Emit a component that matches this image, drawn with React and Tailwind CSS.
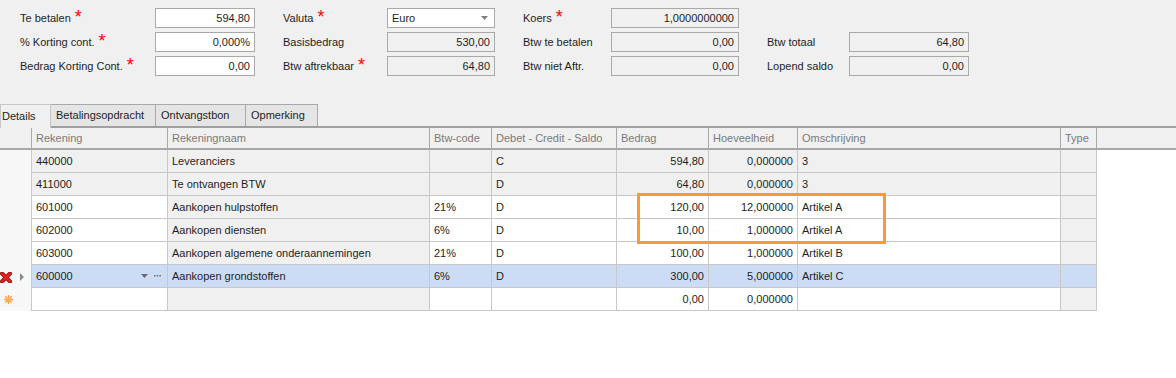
import React from "react";

const font = { fontFamily: '"Liberation Sans", Arial, sans-serif' };

const Star = () => <span className="ml-[4px] text-[18px] leading-[10px] text-[#ff0000] relative top-[-1px]">*</span>;

const Label = ({ w, text, req, ml = 0 }) => (
  <div className="flex items-center h-[20px] text-[11px] text-[#1e1e1e] whitespace-nowrap" style={{ width: w, marginLeft: ml }}>
    {text}
    {req && <Star />}
  </div>
);

const Box = ({ w, value, ro, dropdown }) => (
  <div
    className={`h-[20px] border border-[#a9a9a9] flex items-center px-[4px] text-[11px] text-[#1e1e1e] ${ro ? "bg-[#f0f0f0]" : "bg-white"} ${dropdown ? "justify-between" : "justify-end"}`}
    style={{ width: w }}
  >
    {value}
    {dropdown && (
      <svg width="8" height="4" viewBox="0 0 8 4" className="mr-[1px]">
        <path d="M0 0h7L3.5 4z" fill="#808080" />
      </svg>
    )}
  </div>
);

const cols = [
  { key: "rek", title: "Rekening", w: 136 },
  { key: "naam", title: "Rekeningnaam", w: 262, ro: true },
  { key: "btw", title: "Btw-code", w: 62 },
  { key: "dc", title: "Debet - Credit - Saldo", w: 125 },
  { key: "bedrag", title: "Bedrag", w: 92, right: true },
  { key: "hv", title: "Hoeveelheid", w: 89, right: true },
  { key: "oms", title: "Omschrijving", w: 263 },
  { key: "type", title: "Type", w: 36, ro: true },
];

const rows = [
  { ro: true, rek: "440000", naam: "Leveranciers", btw: "", dc: "C", bedrag: "594,80", hv: "0,000000", oms: "3" },
  { ro: true, rek: "411000", naam: "Te ontvangen BTW", btw: "", dc: "D", bedrag: "64,80", hv: "0,000000", oms: "3" },
  { rek: "601000", naam: "Aankopen hulpstoffen", btw: "21%", dc: "D", bedrag: "120,00", hv: "12,000000", oms: "Artikel A" },
  { rek: "602000", naam: "Aankopen diensten", btw: "6%", dc: "D", bedrag: "10,00", hv: "1,000000", oms: "Artikel A" },
  { rek: "603000", naam: "Aankopen algemene onderaannemingen", btw: "21%", dc: "D", bedrag: "100,00", hv: "1,000000", oms: "Artikel B" },
  { sel: true, rek: "600000", naam: "Aankopen grondstoffen", btw: "6%", dc: "D", bedrag: "300,00", hv: "5,000000", oms: "Artikel C" },
  { add: true, rek: "", naam: "", btw: "", dc: "", bedrag: "0,00", hv: "0,000000", oms: "" },
];

const RedX = () => (
  <svg width="12" height="11" viewBox="0 0 12 11">
    <path d="M2 1.5l8 8M10 1.5l-8 8" stroke="#8a1010" strokeWidth="4" strokeLinecap="round" />
    <path d="M2 1.5l8 8M10 1.5l-8 8" stroke="#f02020" strokeWidth="2.4" strokeLinecap="round" />
  </svg>
);

const Burst = () => (
  <svg width="9" height="9" viewBox="0 0 9 9">
    <g stroke="#f5a040" strokeWidth="1.3">
      <path d="M4.5 0v9M0 4.5h9M1.3 1.3l6.4 6.4M7.7 1.3l-6.4 6.4" />
    </g>
    <circle cx="4.5" cy="4.5" r="2" fill="#f7b060" />
  </svg>
);

export default function App() {
  return (
    <div className="relative w-[1176px] h-[378px] bg-white overflow-hidden" style={font}>
      {/* top form */}
      <div className="bg-[#f0f0f0] pt-[8px] h-[108px] flex flex-col gap-[4px]">
        <div className="flex pl-[20px]">
          <Label w={135} text="Te betalen" req />
          <Box w={100} value="594,80" />
          <Label w={104} ml={28} text="Valuta" req />
          <Box w={108} value="Euro" dropdown />
          <Label w={88} ml={28} text="Koers" req />
          <Box w={128} value="1,0000000000" ro />
        </div>
        <div className="flex pl-[20px]">
          <Label w={135} text="% Korting cont." req />
          <Box w={100} value="0,000%" />
          <Label w={104} ml={28} text="Basisbedrag" />
          <Box w={108} value="530,00" ro />
          <Label w={88} ml={28} text="Btw te betalen" />
          <Box w={128} value="0,00" ro />
          <Label w={82} ml={28} text="Btw totaal" />
          <Box w={120} value="64,80" ro />
        </div>
        <div className="flex pl-[20px]">
          <Label w={135} text="Bedrag Korting Cont." req />
          <Box w={100} value="0,00" />
          <Label w={104} ml={28} text="Btw aftrekbaar" req />
          <Box w={108} value="64,80" ro />
          <Label w={88} ml={28} text="Btw niet Aftr." />
          <Box w={128} value="0,00" ro />
          <Label w={82} ml={28} text="Lopend saldo" />
          <Box w={120} value="0,00" ro />
        </div>
      </div>

      {/* tabs */}
      <div className="bg-[#f0f0f0] flex items-end h-[20px] mt-[-2px]">
        <div className="w-[51px] h-[24px] mb-[-2px] bg-[#f0f0f0] border border-b-0 border-[#c8c8c8] text-[11px] text-[#1e1e1e] flex items-center pl-[1px] relative z-10">
          Details
        </div>
        {["Betalingsopdracht", "Ontvangstbon", "Opmerking"].map((t, i) => (
          <div
            key={t}
            className="h-[22px] bg-[#e5e5e5] border border-b-0 border-l-0 border-[#a9a9a9] text-[11px] text-[#1e1e1e] flex items-center px-[5px]"
            style={{ width: [105, 90, 72][i] }}
          >
            {t}
          </div>
        ))}
      </div>
      <div className="h-[2px] bg-[#a0a0a0]" />

      {/* grid */}
      <div className="flex h-[22px] bg-[#f0f0f0] border-b-[2px] border-[#a8a8a8]">
        <div className="w-[32px] border-r border-[#a8a8a8] shrink-0" />
        {cols.map((c) => (
          <div key={c.key} className="border-r border-[#a8a8a8] text-[11px] text-[#7a7a7a] flex items-center px-[4px] shrink-0 whitespace-nowrap" style={{ width: c.w }}>
            {c.title}
          </div>
        ))}
      </div>
      {rows.map((r, i) => (
        <div key={i} className="flex h-[23px]">
          <div className="w-[32px] border-r border-[#c8c8c8] bg-[#f7f7f7] flex items-center shrink-0">
            {r.sel && (
              <>
                <span className="mt-[1px]"><RedX /></span>
                <svg width="4" height="8" viewBox="0 0 4 8" className="ml-[8px]">
                  <path d="M0 0l4 4-4 4z" fill="#8a8a8a" />
                </svg>
              </>
            )}
            {r.add && (
              <span className="ml-[4px]"><Burst /></span>
            )}
          </div>
          {cols.map((c) => {
            const gray = r.ro || c.ro;
            const bg = r.sel ? "bg-[#cddcf5]" : gray ? "bg-[#f0f0f0]" : "bg-white";
            return (
              <div
                key={c.key}
                className={`${bg} border-r border-b border-[#c8c8c8] text-[11px] text-[#1e1e1e] flex items-center px-[4px] shrink-0 whitespace-nowrap ${c.right ? "justify-end" : "justify-between"}`}
                style={{ width: c.w }}
              >
                {r[c.key]}
                {r.sel && c.key === "rek" && (
                  <span className="flex items-center gap-[6px] mr-[2px]">
                    <svg width="7" height="4" viewBox="0 0 7 4">
                      <path d="M0 0h7L3.5 4z" fill="#6a6a6a" />
                    </svg>
                    <svg width="7" height="2" viewBox="0 0 7 2">
                      <path d="M0 0h1.5v1.5H0zM2.7 0h1.5v1.5H2.7zM5.4 0h1.5v1.5H5.4z" fill="#6a6a6a" />
                    </svg>
                  </span>
                )}
              </div>
            );
          })}
        </div>
      ))}

      {/* highlight box */}
      <div className="absolute left-[637px] top-[193px] w-[249px] h-[51px] border-[3px] border-[#f7993a]" />
    </div>
  );
}
